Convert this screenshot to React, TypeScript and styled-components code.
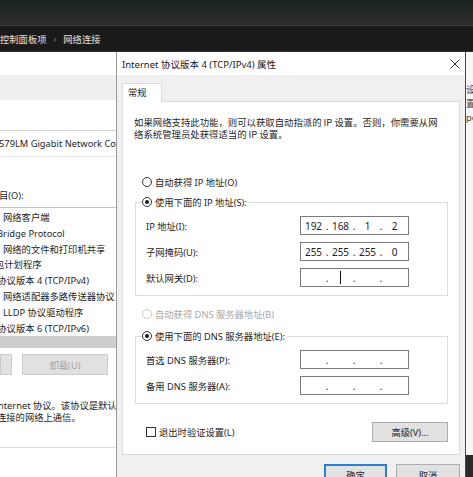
import styled, { createGlobalStyle } from "styled-components";

const GlobalStyle = createGlobalStyle`
  html, body {
    margin: 0;
    padding: 0;
  }
  body {
    background: #1b1b1b;
    font-family: "Noto Sans", "Noto Sans CJK SC", sans-serif;
  }
`;

const Screen = styled.div`
  width: 473px;
  height: 477px;
  overflow: hidden;
  display: flex;
  flex-direction: column;
  background: #1b1b1b;
`;

const TitleStrip = styled.div`
  height: 25px;
  flex-shrink: 0;
  background: linear-gradient(180deg, #1a2521 0%, #252826 45%, #2b2b2b 100%);
  border-bottom: 1px solid #3e3e3e;
`;

const AddressBar = styled.div`
  height: 25px;
  flex-shrink: 0;
  display: flex;
  align-items: center;
  gap: 7px;
  background: #1a1a1a;
  border-bottom: 1px solid #2e2e2e;
  color: #e2e2e2;
  font-size: 9.3px;
  white-space: nowrap;
`;

const Chevron = styled.span`
  color: #8a8a8a;
  font-size: 9px;
`;

const Desktop = styled.div`
  flex: 1;
  min-height: 0;
  display: flex;
`;

/* ---- window behind the dialog ---- */

const BackWindow = styled.div`
  width: 116px;
  flex-shrink: 0;
  background: #fff;
  display: flex;
  flex-direction: column;
  overflow: hidden;
  font-size: 9.3px;
  color: #1e1e1e;
`;

const Band = styled.div<{ $h: number; $gray?: boolean }>`
  height: ${(p) => p.$h}px;
  flex-shrink: 0;
  background: ${(p) => (p.$gray ? "#efefef" : "#fff")};
`;

const AdapterBox = styled.div`
  height: 25px;
  flex-shrink: 0;
  border-top: 1px solid #d2d2d2;
  border-bottom: 1px solid #e4e4e4;
  display: flex;
  align-items: center;
  white-space: nowrap;
`;

const ClipLine = styled.div<{ $shift?: number; $top?: number }>`
  white-space: nowrap;
  line-height: 12px;
  margin-top: ${(p) => p.$top ?? 0}px;
  margin-left: ${(p) => p.$shift ?? 0}px;
`;

const ItemList = styled.div`
  margin-top: 5px;
  border-top: 1px solid #c4c4c4;
  padding-top: 2px;
  display: flex;
  flex-direction: column;
`;

const ListItem = styled.div<{ $shift: number }>`
  height: 15.8px;
  line-height: 15.8px;
  white-space: nowrap;
  margin-left: ${(p) => p.$shift}px;
`;

const ScrollThumb = styled.div`
  height: 12px;
  background: #cdcdcd;
`;

const BackButtons = styled.div`
  display: flex;
  gap: 10px;
  margin-top: 6px;
`;

const GhostButton = styled.div<{ $w: number }>`
  width: ${(p) => p.$w}px;
  height: 21px;
  box-sizing: border-box;
  background: #e1e1e1;
  border: 1px solid #cccccc;
  color: #a3a3a3;
  display: flex;
  align-items: center;
  justify-content: center;
`;

const BottomRule = styled.div`
  margin-top: 23px;
  border-top: 1px solid #dcdcdc;
  flex: 1;
`;

/* ---- properties dialog ---- */

const Dialog = styled.div`
  width: 348px;
  flex-shrink: 0;
  display: flex;
  flex-direction: column;
  border-left: 1px solid #9a9a9a;
  border-right: 1px solid #474747;
  background: #f0f0f0;
  font-size: 9.3px;
  color: #1e1e1e;
`;

const DialogTitle = styled.div`
  height: 23px;
  flex-shrink: 0;
  background: #fff;
  display: flex;
  align-items: center;
  justify-content: space-between;
  padding: 0 5px;
  font-size: 9.5px;
  color: #1a1a1a;
  white-space: nowrap;
`;

const DialogBody = styled.div`
  padding: 8px 5px 0;
  display: flex;
  flex-direction: column;
`;

const Tab = styled.div`
  width: 40px;
  height: 19px;
  box-sizing: border-box;
  border: 1px solid #d9d9d9;
  border-bottom: none;
  background: #fff;
  padding-left: 5px;
  line-height: 17px;
  margin-bottom: -1px;
  position: relative;
  z-index: 1;
`;

const Panel = styled.div`
  border: 1px solid #d9d9d9;
  background: #fff;
  padding: 14px 11px 12px;
  display: flex;
  flex-direction: column;
`;

const Intro = styled.div`
  font-family: "Noto Sans CJK SC", "Noto Sans", sans-serif;
  font-size: 9.4px;
  line-height: 12px;
  white-space: nowrap;
`;

const Option = styled.div<{ $top: number; $left?: number; $disabled?: boolean }>`
  display: flex;
  align-items: center;
  gap: 3px;
  height: 14px;
  margin-top: ${(p) => p.$top}px;
  margin-left: ${(p) => p.$left ?? 0}px;
  color: ${(p) => (p.$disabled ? "#a8a8a8" : "#1e1e1e")};
  white-space: nowrap;
`;

const Radio = styled.span<{ $checked?: boolean; $disabled?: boolean }>`
  width: 10px;
  height: 10px;
  box-sizing: border-box;
  border-radius: 50%;
  border: 1px solid ${(p) => (p.$disabled ? "#cdcdcd" : "#333")};
  display: flex;
  align-items: center;
  justify-content: center;
  &::after {
    content: "";
    width: 4px;
    height: 4px;
    border-radius: 50%;
    background: ${(p) => (p.$checked ? "#1e1e1e" : "transparent")};
  }
`;

const GroupBox = styled.fieldset<{ $top: number }>`
  margin: ${(p) => p.$top}px 0 0 1px;
  padding: 7px 0 8px 6px;
  border: 1px solid #dcdcdc;
  min-inline-size: auto;
`;

const GroupLegend = styled.legend`
  padding: 0 2px 0 0;
  margin: 0;
  height: 14px;
  display: flex;
  align-items: center;
  gap: 3px;
  white-space: nowrap;
`;

const FieldRow = styled.div`
  display: grid;
  grid-template-columns: 154px 109px;
  align-items: center;
  height: 19px;
  margin-left: 4px;
  & + & {
    margin-top: 7px;
  }
`;

const IpBox = styled.div`
  height: 19px;
  box-sizing: border-box;
  border: 1px solid #7a7a7a;
  background: #fff;
  display: flex;
  font-size: 10px;
  color: #1e1e1e;
`;

const Seg = styled.span`
  width: 25px;
  display: flex;
  align-items: center;
  justify-content: center;
`;

const Dot = styled.span`
  width: 2px;
  display: flex;
  align-items: center;
  justify-content: center;
`;

const Caret = styled.span`
  width: 1px;
  height: 13px;
  background: #111;
`;

const CheckRow = styled.div`
  display: flex;
  align-items: center;
  justify-content: space-between;
  margin-top: 18px;
`;

const CheckLabel = styled.label`
  display: flex;
  align-items: center;
  gap: 3px;
  margin-left: 12px;
`;

const CheckBox = styled.span`
  width: 10px;
  height: 10px;
  box-sizing: border-box;
  border: 1px solid #333;
  background: #fff;
`;

const Button = styled.div<{ $w: number; $primary?: boolean }>`
  width: ${(p) => p.$w}px;
  height: ${(p) => (p.$primary ? 21 : 20)}px;
  box-sizing: border-box;
  background: #e1e1e1;
  border: ${(p) => (p.$primary ? "2px solid #2a7fd0" : "1px solid #adadad")};
  display: flex;
  align-items: center;
  justify-content: center;
  color: #1e1e1e;
  flex-shrink: 0;
`;

const Footer = styled.div`
  display: flex;
  justify-content: flex-end;
  gap: 9px;
  margin-top: 9px;
  & > div {
    height: 21px;
  }
`;

/* ---- sliver of another window at the right ---- */

const RightSliver = styled.div`
  flex: 1;
  display: flex;
  flex-direction: column;
  overflow: hidden;
`;

const SliverPane = styled.div`
  flex: 1;
  background: #f7f7f7;
  padding-top: 31px;
  font-size: 9.3px;
  line-height: 14px;
  color: #444;
  white-space: nowrap;
`;

const SliverShade = styled.div`
  height: 22px;
  background: #2a2a2a;
`;

function CloseIcon() {
  return (
    <svg width="10" height="10" viewBox="0 0 10 10">
      <path d="M0.5 0.5L9.5 9.5M9.5 0.5L0.5 9.5" stroke="#2b2b2b" strokeWidth="1" />
    </svg>
  );
}

function IpField({ parts, caret }: { parts: string[]; caret?: boolean }) {
  return (
    <IpBox>
      <Seg>{parts[0]}</Seg>
      <Dot>.</Dot>
      <Seg>{caret ? <Caret /> : parts[1]}</Seg>
      <Dot>.</Dot>
      <Seg>{parts[2]}</Seg>
      <Dot>.</Dot>
      <Seg>{parts[3]}</Seg>
    </IpBox>
  );
}

const components: [string, number][] = [
  ["网络客户端", 3],
  ["Bridge Protocol", -3],
  ["网络的文件和打印机共享", 3],
  ["包计划程序", -5],
  ["网协议版本 4 (TCP/IPv4)", -12],
  ["网络适配器多路传送器协议", 3],
  ["LLDP 协议驱动程序", 3],
  ["网协议版本 6 (TCP/IPv6)", -12],
];

export default function App() {
  return (
    <Screen>
      <GlobalStyle />
      <TitleStrip />
      <AddressBar>
        <span>控制面板项</span>
        <Chevron>›</Chevron>
        <span>网络连接</span>
      </AddressBar>
      <Desktop>
        <BackWindow>
          <Band $h={23} />
          <Band $h={25} $gray />
          <Band $h={30} />
          <AdapterBox>
            <ClipLine $shift={-1}>579LM Gigabit Network Co</ClipLine>
          </AdapterBox>
          <ClipLine $top={33} $shift={-1}>目(O):</ClipLine>
          <ItemList>
            {components.map(([name, shift]) => (
              <ListItem key={name} $shift={shift}>
                {name}
              </ListItem>
            ))}
          </ItemList>
          <ScrollThumb />
          <BackButtons>
            <GhostButton $w={12} />
            <GhostButton $w={86}>卸载(U)</GhostButton>
          </BackButtons>
          <ClipLine $top={25} $shift={-2}>nternet 协议。该协议是默认的</ClipLine>
          <ClipLine $shift={-3}>连接的网络上通信。</ClipLine>
          <BottomRule />
        </BackWindow>

        <Dialog>
          <DialogTitle>
            <span>Internet 协议版本 4 (TCP/IPv4) 属性</span>
            <CloseIcon />
          </DialogTitle>
          <DialogBody>
            <Tab>常规</Tab>
            <Panel>
              <Intro>
                <div>如果网络支持此功能，则可以获取自动指派的 IP 设置。否则，你需要从网</div>
                <div>络系统管理员处获得适当的 IP 设置。</div>
              </Intro>

              <Option $top={35} $left={8}>
                <Radio />
                自动获得 IP 地址(O)
              </Option>
              <GroupBox $top={6}>
                <GroupLegend>
                  <Radio $checked />
                  使用下面的 IP 地址(S):
                </GroupLegend>
                <FieldRow>
                  <span>IP 地址(I):</span>
                  <IpField parts={["192", "168", "1", "2"]} />
                </FieldRow>
                <FieldRow>
                  <span>子网掩码(U):</span>
                  <IpField parts={["255", "255", "255", "0"]} />
                </FieldRow>
                <FieldRow>
                  <span>默认网关(D):</span>
                  <IpField parts={["", "", "", ""]} caret />
                </FieldRow>
              </GroupBox>

              <Option $top={11} $left={8} $disabled>
                <Radio $disabled />
                自动获得 DNS 服务器地址(B)
              </Option>
              <GroupBox $top={8}>
                <GroupLegend>
                  <Radio $checked />
                  使用下面的 DNS 服务器地址(E):
                </GroupLegend>
                <FieldRow>
                  <span>首选 DNS 服务器(P):</span>
                  <IpField parts={["", "", "", ""]} />
                </FieldRow>
                <FieldRow>
                  <span>备用 DNS 服务器(A):</span>
                  <IpField parts={["", "", "", ""]} />
                </FieldRow>
              </GroupBox>

              <CheckRow>
                <CheckLabel>
                  <CheckBox />
                  退出时验证设置(L)
                </CheckLabel>
                <Button $w={76}>高级(V)...</Button>
              </CheckRow>
            </Panel>
            <Footer>
              <Button $w={63} $primary>
                确定
              </Button>
              <Button $w={64}>取消</Button>
            </Footer>
          </DialogBody>
        </Dialog>

        <RightSliver>
          <SliverPane>
            <div>设</div>
            <div>置</div>
            <div>po</div>
          </SliverPane>
          <SliverShade />
        </RightSliver>
      </Desktop>
    </Screen>
  );
}
